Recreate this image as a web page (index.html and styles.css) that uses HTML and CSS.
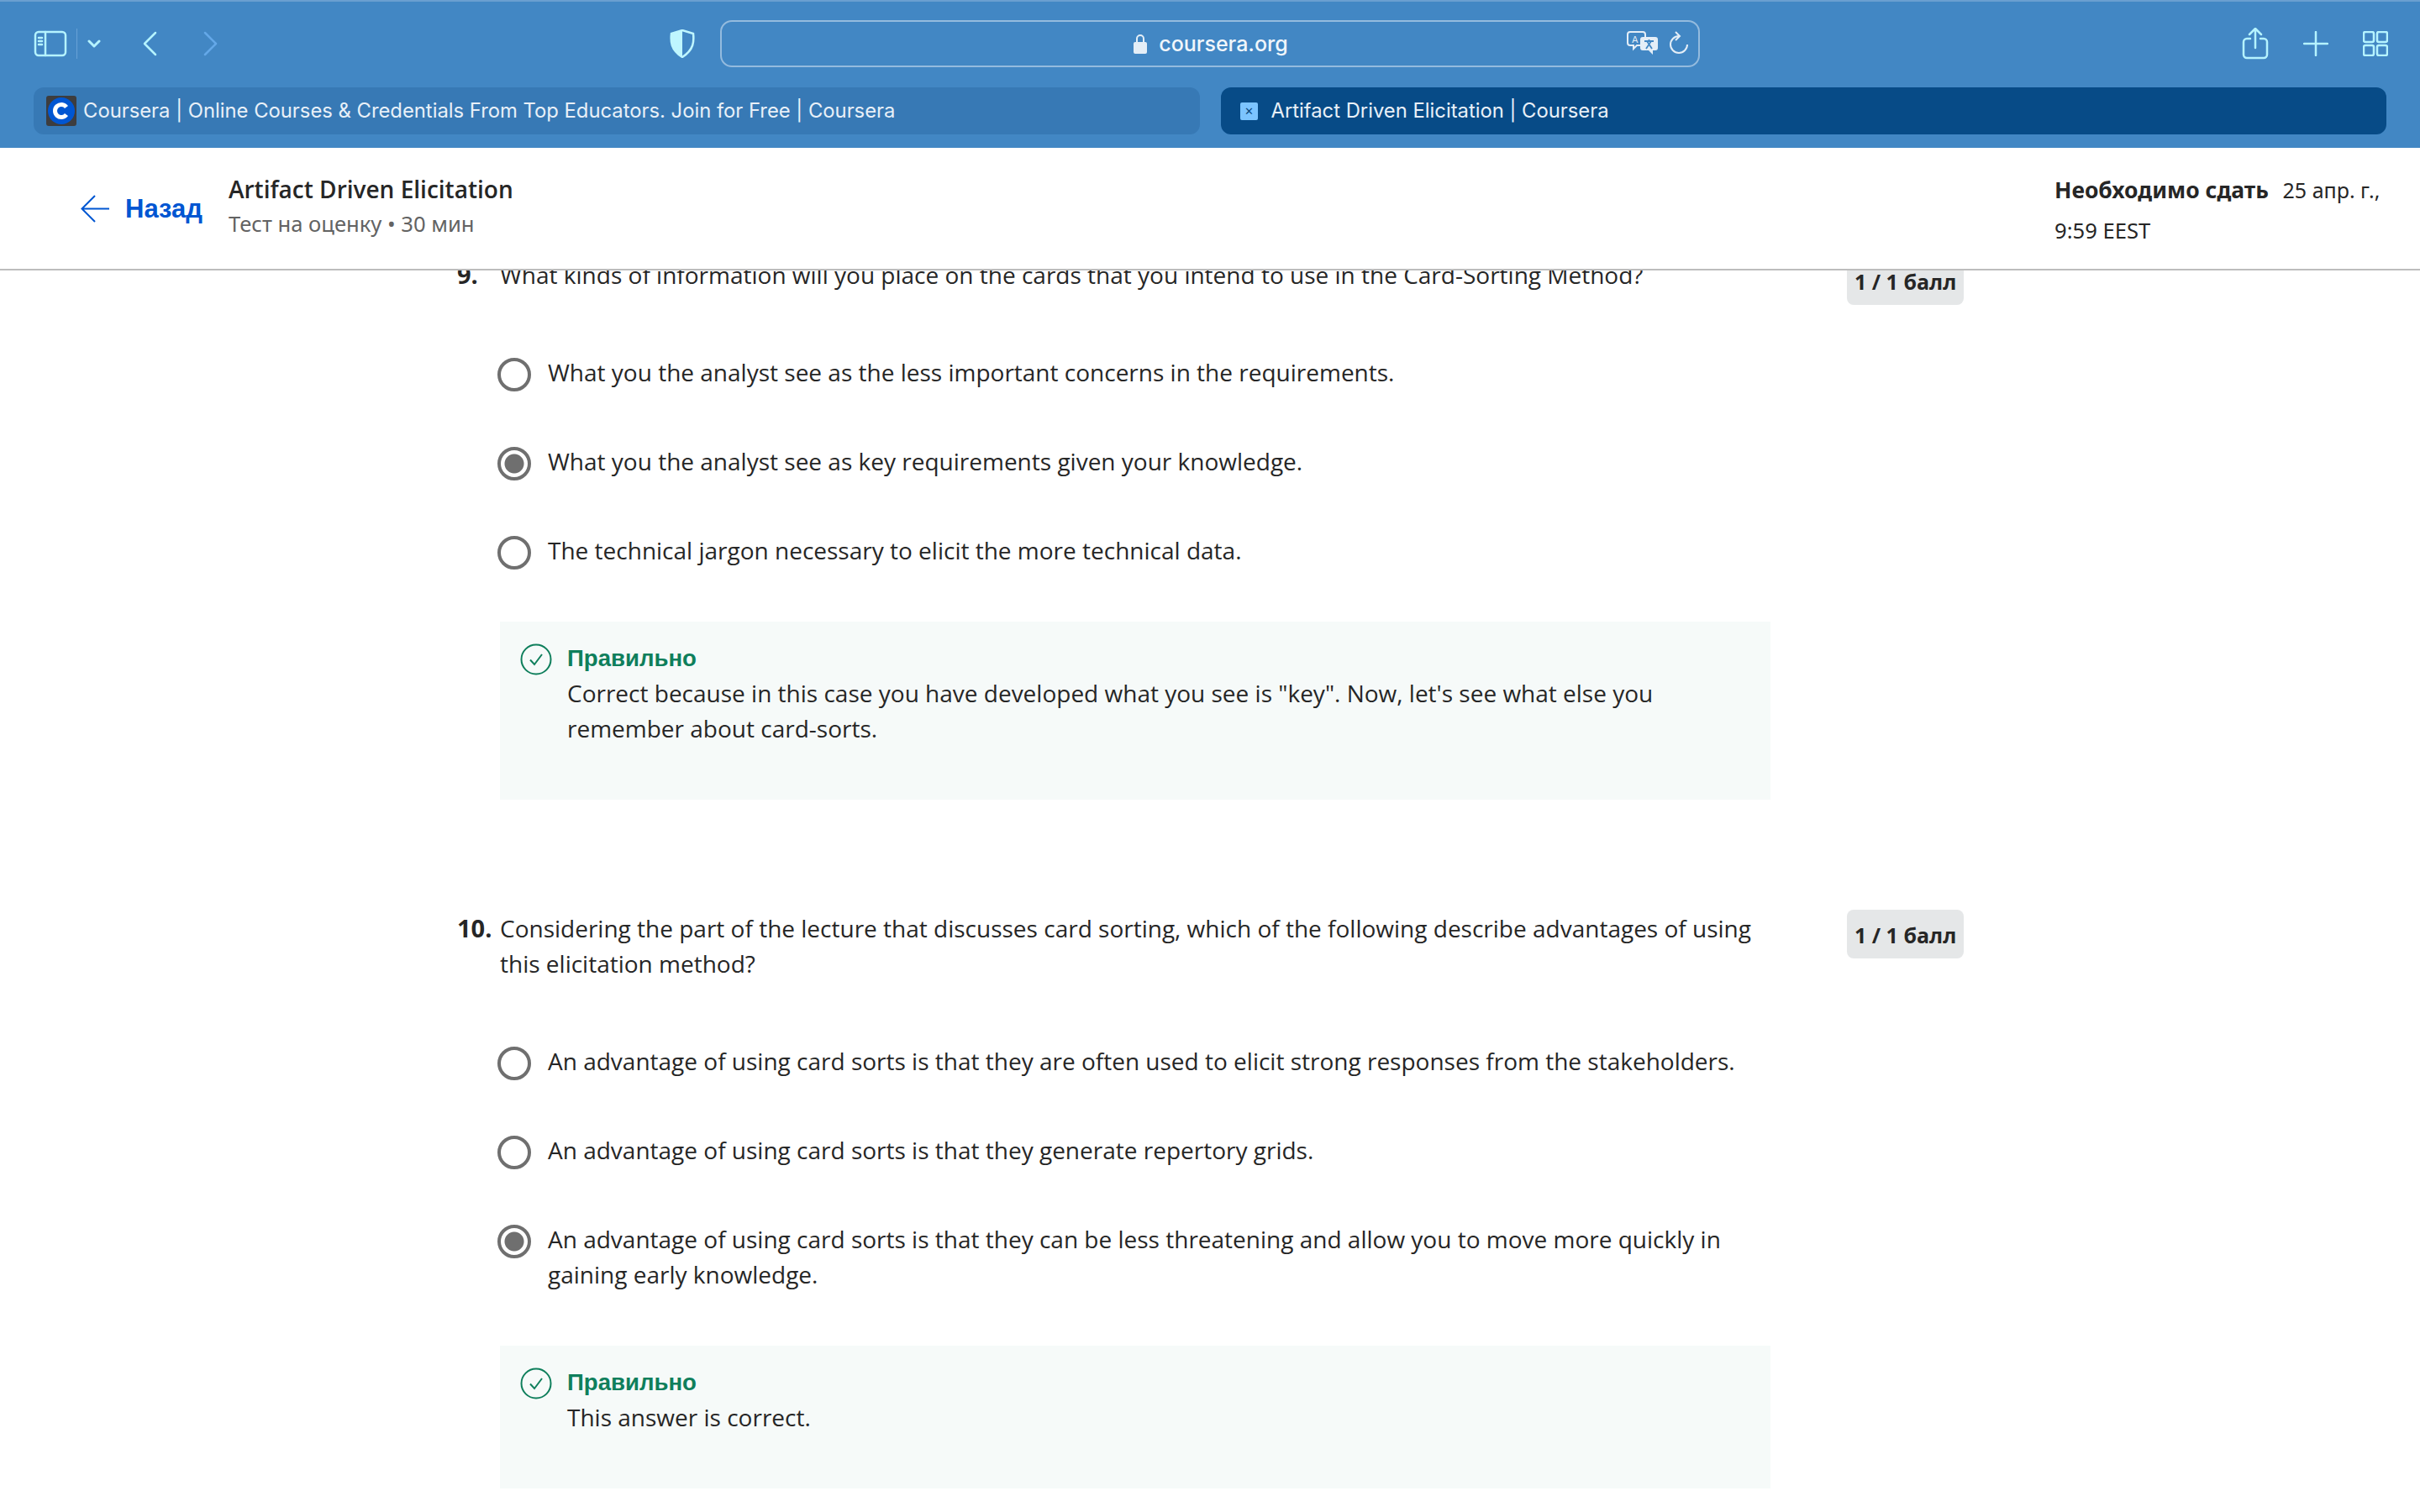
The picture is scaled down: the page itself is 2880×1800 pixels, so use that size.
FILE: index.html
```html
<!DOCTYPE html>
<html lang="ru">
<head>
    <meta charset="UTF-8">
    <title>Artifact Driven Elicitation | Coursera</title>
    <link rel="stylesheet" href="styles.css">
</head>
<body>

<div class="browser-bar">
    <div class="toolbar">
        <div class="nav-left">
            <svg class="ico" width="40" height="32" viewBox="0 0 40 32"><rect x="2" y="2" width="36" height="28" rx="4"/><path d="M14 2v28M6 9h4M6 13h4M6 17h4"/></svg>
            <span class="tool-sep"></span>
            <svg class="ico chev" width="16" height="11" viewBox="0 0 16 11"><path d="M2 2l6 6 6-6"/></svg>
            <svg class="ico back" width="18" height="30" viewBox="0 0 18 30"><path d="M16 2L3 15l13 13"/></svg>
            <svg class="ico fwd" width="18" height="30" viewBox="0 0 18 30"><path d="M2 2l13 13L2 28"/></svg>
        </div>
        <svg class="shield" width="30" height="34" viewBox="0 0 30 34"><path d="M15 1l13 4c1 9 1 19-13 28C1 24 1 14 2 5z" fill="none" stroke="#bff6ff" stroke-width="2.5"/><path d="M15 1L2 5c-1 9-1 19 13 28z" fill="#bff6ff"/></svg>
        <div class="address">
            <div class="address-center">
                <svg width="16" height="24" viewBox="0 0 16 24"><path d="M4 11V6a4 4 0 018 0v5" fill="none" stroke="#e4eef7" stroke-width="2"/><rect y="10" width="16" height="14" rx="2" fill="#e4eef7"/></svg>
                <span class="host">coursera.org</span>
            </div>
            <div class="address-tools">
                <svg width="38" height="28" viewBox="0 0 38 28"><path d="M4 1h15a3 3 0 013 3v10a3 3 0 01-3 3h-7l-4 4v-4H4a3 3 0 01-3-3V4a3 3 0 013-3z" fill="none" stroke="#e4eef7" stroke-width="2"/><text x="6" y="14" class="tr-a">A</text><path d="M19 7h15a3 3 0 013 3v10a3 3 0 01-3 3h-3v5l-5-5h-7a3 3 0 01-3-3V10a3 3 0 013-3z" fill="#e4eef7"/><path d="M21 12h11M26.500 10v2M23 21l6-9M30 21l-6-9" fill="none" stroke="#4287c4" stroke-width="1.800"/></svg>
                <svg width="24" height="28" viewBox="0 0 24 28"><path d="M12 6a10 10 0 1010 10M8 1l5 5-5 5" fill="none" stroke="#e4eef7" stroke-width="2"/></svg>
            </div>
        </div>
        <div class="nav-right">
            <svg class="ico" width="32" height="38" viewBox="0 0 32 38"><path d="M10 13H6a4 4 0 00-4 4v15a4 4 0 004 4h20a4 4 0 004-4V17a4 4 0 00-4-4h-4M16 24V2M9 8l7-7 7 7"/></svg>
            <svg class="ico" width="30" height="30" viewBox="0 0 30 30"><path d="M15 1v28M1 15h28"/></svg>
            <svg class="ico" width="30" height="30" viewBox="0 0 30 30"><rect x="1" y="1" width="12" height="12" rx="2"/><rect x="17" y="1" width="12" height="12" rx="2"/><rect x="1" y="17" width="12" height="12" rx="2"/><rect x="17" y="17" width="12" height="12" rx="2"/></svg>
        </div>
    </div>
    <div class="tabs">
        <div class="tab">
            <span class="favicon"><svg width="32" height="32" viewBox="0 0 32 32"><circle cx="16" cy="16" r="16" fill="#0056d2"/><path d="M22 11.500a7.500 7.500 0 100 9" fill="none" stroke="#fff" stroke-width="5"/></svg></span>
            <span>Coursera | Online Courses &amp; Credentials From Top Educators. Join for Free | Coursera</span>
        </div>
        <div class="tab tab-active">
            <span class="tab-close">✕</span>
            <span>Artifact Driven Elicitation | Coursera</span>
        </div>
    </div>
</div>

<header class="quiz-header">
    <a class="back-link">
        <svg width="34" height="34" viewBox="0 0 34 34"><path d="M34 16.500H2M17 1L1.500 16.500 17 32" fill="none" stroke="#0056d2" stroke-width="2"/></svg>
        <span class="back-text">Назад</span>
    </a>
    <div class="quiz-title">
        <div class="quiz-name">Artifact Driven Elicitation</div>
        <div class="quiz-meta">Тест на оценку • 30 мин</div>
    </div>
    <div class="due">
        <div><b>Необходимо сдать</b> <span class="due-date">25 апр. г.,</span></div>
        <div class="due-time">9:59 EEST</div>
    </div>
</header>

<main class="scroll-area">
    <section class="question q-first">
        <div class="q-num">9.</div>
        <div class="q-body">
            <p class="q-text">What kinds of information will you place on the cards that you intend to use in the Card-Sorting Method?</p>
            <div class="option"><span class="radio"></span><span>What you the analyst see as the less important concerns in the requirements.</span></div>
            <div class="option"><span class="radio checked"></span><span>What you the analyst see as key requirements given your knowledge.</span></div>
            <div class="option"><span class="radio"></span><span>The technical jargon necessary to elicit the more technical data.</span></div>
            <div class="callout">
                <svg class="ok-icon" width="38" height="38" viewBox="0 0 38 38"><circle cx="19" cy="19" r="17.500" fill="none" stroke="#0f7f5c" stroke-width="2"/><path d="M12 19.500l5 5.500 9-12" fill="none" stroke="#0f7f5c" stroke-width="2"/></svg>
                <div>
                    <div class="ok-label">Правильно</div>
                    <div>Correct because in this case you have developed what you see is "key". Now, let's see what else you<br>remember about card-sorts.</div>
                </div>
            </div>
        </div>
        <div class="points">1 / 1 балл</div>
    </section>

    <section class="question">
        <div class="q-num">10.</div>
        <div class="q-body">
            <p class="q-text">Considering the part of the lecture that discusses card sorting, which of the following describe advantages of using<br>this elicitation method?</p>
            <div class="option"><span class="radio"></span><span>An advantage of using card sorts is that they are often used to elicit strong responses from the stakeholders.</span></div>
            <div class="option"><span class="radio"></span><span>An advantage of using card sorts is that they generate repertory grids.</span></div>
            <div class="option"><span class="radio checked"></span><span>An advantage of using card sorts is that they can be less threatening and allow you to move more quickly in<br>gaining early knowledge.</span></div>
            <div class="callout">
                <svg class="ok-icon" width="38" height="38" viewBox="0 0 38 38"><circle cx="19" cy="19" r="17.500" fill="none" stroke="#0f7f5c" stroke-width="2"/><path d="M12 19.500l5 5.500 9-12" fill="none" stroke="#0f7f5c" stroke-width="2"/></svg>
                <div>
                    <div class="ok-label">Правильно</div>
                    <div>This answer is correct.</div>
                </div>
            </div>
        </div>
        <div class="points">1 / 1 балл</div>
    </section>
</main>

</body>
</html>
```

FILE: styles.css
```css
body {
    margin: 0;
    height: 1800px;
    overflow: hidden;
    background: white;
    color: #262626;
    font-family: "Open Sans", sans-serif;
    font-size: 28px;
    line-height: 42px;
}
.browser-bar {
    height: 176px;
    box-sizing: border-box;
    background-color: #4287c4;
    border-top: 2px solid #6a9fd0;
    padding: 0 40px;
}
.toolbar {
    display: flex;
    align-items: center;
    height: 102px;
    padding-bottom: 2px;
    box-sizing: border-box;
}
.ico {
    fill: none;
    stroke: #b5f3ff;
    stroke-width: 2.5;
    stroke-linecap: round;
    stroke-linejoin: round;
}
.nav-left {
    display: flex;
    align-items: center;
    width: 757px;
}
.tool-sep {
    width: 1px;
    height: 36px;
    background: #68a2d6;
    margin: 0 12px 0 11px;
}
.chev {
    stroke-width: 3;
}
.back {
    margin-left: 49px;
}
.fwd {
    margin-left: 55px;
    stroke: #64a8e8;
}
.shield {
    margin-right: 30px;
}
.address {
    position: relative;
    display: flex;
    align-items: center;
    justify-content: center;
    width: 1166px;
    height: 56px;
    border: 2px solid #94bbde;
    border-radius: 14px;
    box-sizing: border-box;
}
.address-center {
    display: flex;
    align-items: center;
    gap: 14px;
    color: #f0f6fb;
    font-family: Inter, sans-serif;
    font-size: 25px;
    font-weight: 500;
    margin-left: 2px;
}
.address-tools {
    position: absolute;
    right: 11px;
    top: 11px;
    display: flex;
    gap: 12px;
}
.tr-a {
    font-family: Inter, sans-serif;
    font-size: 11px;
    fill: #e4eef7;
}
.nav-right {
    display: flex;
    align-items: center;
    gap: 41px;
    margin-left: auto;
    margin-right: -2px;
}
.tabs {
    display: grid;
    grid-template-columns: 1fr 1fr;
    gap: 25px;
}
.tab {
    display: flex;
    align-items: center;
    gap: 8px;
    height: 56px;
    padding-left: 15px;
    background-color: #3779b5;
    border-radius: 12px;
    color: #e8f0f8;
    font-family: Inter, sans-serif;
    font-size: 23.8px;
}
.tab-active {
    gap: 16px;
    padding-left: 23px;
    background-color: #074b87;
}
.favicon {
    display: flex;
    align-items: center;
    justify-content: center;
    width: 36px;
    height: 36px;
    background: #3d3d3f;
    border-radius: 3px;
}
.tab-close {
    display: flex;
    align-items: center;
    justify-content: center;
    width: 21px;
    height: 21px;
    background: #7cc4ff;
    border-radius: 2px;
    color: #0d4a80;
    font-size: 13px;
}
.quiz-header {
    display: flex;
    align-items: center;
    height: 146px;
    box-sizing: border-box;
    border-bottom: 2px solid #bdbdbd;
    background: white;
}
.back-link {
    display: flex;
    align-items: center;
    gap: 19px;
    width: 176px;
    margin-left: 96px;
    margin-top: 2px;
    flex-shrink: 0;
    overflow: hidden;
}
.back-text {
    color: #0056d2;
    font-family: "Liberation Sans", sans-serif;
    font-size: 31px;
    font-weight: bold;
}
.quiz-title {
    width: 1000px;
    margin-top: -3px;
}
.quiz-name {
    font-size: 28px;
    font-weight: 600;
    line-height: 41px;
}
.quiz-meta {
    color: #636363;
    font-family: "Noto Sans", sans-serif;
    font-size: 25.6px;
}
.due {
    margin-left: auto;
    width: 435px;
    margin-top: 4px;
    font-family: "Noto Sans", sans-serif;
    font-size: 25.6px;
    line-height: 48px;
}
.due b {
    font-size: 26.5px;
    font-weight: 700;
}
.due-date {
    font-size: 25px;
    margin-left: 10px;
}
.scroll-area {
    height: 1478px;
    overflow: hidden;
}
.question {
    display: flex;
    margin-left: 544px;
    margin-bottom: 132px;
}
.q-first {
    margin-top: -16px;
}
.q-num {
    width: 51px;
    flex-shrink: 0;
    font-size: 29px;
    font-weight: 700;
}
.q-body {
    width: 1512px;
    flex-shrink: 0;
}
.q-text {
    margin: 0 0 74px;
}
.option {
    display: flex;
    gap: 20px;
    margin-left: -3px;
    margin-bottom: 64px;
}
.radio {
    width: 40px;
    height: 40px;
    margin-top: 4px;
    margin-bottom: -2px;
    flex-shrink: 0;
    box-sizing: border-box;
    border: 4px solid #6f6f6f;
    border-radius: 50%;
    background: white;
}
.radio.checked {
    background: radial-gradient(circle, #6f6f6f 0 11px, white 12px);
}
.callout {
    display: flex;
    gap: 18px;
    padding: 24px 40px 64px 24px;
    background-color: #f6faf9;
}
.ok-icon {
    margin-top: 2px;
    flex-shrink: 0;
}
.ok-label {
    color: #0f7f5c;
    font-family: "Liberation Sans", sans-serif;
    font-size: 27.6px;
    font-weight: bold;
    line-height: 40px;
}
.points {
    height: 58px;
    margin-left: 91px;
    margin-top: -1px;
    padding: 0 9px;
    flex-shrink: 0;
    background: #e5e7e8;
    border-radius: 8px;
    font-size: 25px;
    font-weight: 700;
    line-height: 60px;
    white-space: nowrap;
}
```
